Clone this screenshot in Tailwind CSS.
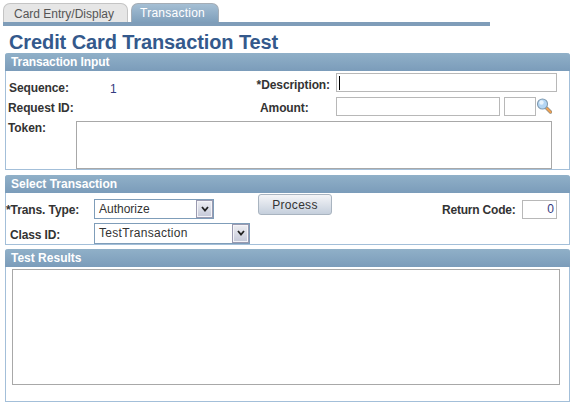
<!DOCTYPE html>
<html lang="en">
<head>
    <meta charset="UTF-8">
    <title>Credit Card Transaction Test</title>
    <script src="https://cdn.jsdelivr.net/npm/@tailwindcss/browser@4"></script>
</head>
<body class="bg-white w-[570px] h-[412px] overflow-hidden font-['Liberation_Sans',Arial,sans-serif] text-[12px] text-[#333]">

    <!-- Tabs -->
    <div class="pl-[3px] pt-[3px]">
        <div class="flex w-[487px] h-[23px] border-b-4 border-[#7f9db9] items-start gap-[3px]">
            <div class="w-[125px] h-[19px] pl-[10px] leading-[20px] bg-[#e6e6e6] border border-b-0 border-[#c4c4c4] rounded-t-[7px] text-[#555]">Card Entry/Display</div>
            <div class="w-[88px] h-[19px] pl-[8px] leading-[19px] tracking-[0.25px] bg-gradient-to-b from-[#a5bfd4] to-[#7f9fbb] border border-b-0 border-[#a4adb6] rounded-t-[7px] text-white">Transaction</div>
        </div>
    </div>

    <h1 class="ml-[9px] mt-[5px] h-[22px] text-[20px] leading-[22px] tracking-[-0.1px] font-bold text-[#34598c]">Credit Card Transaction Test</h1>

    <!-- Transaction Input -->
    <section class="ml-[5px] w-[565px] h-[117px] border border-t-0 border-[#a3bfd9] rounded-t-[3px] flex flex-col">
        <div class="-mx-px h-[18px] leading-[18px] pl-[6px] tracking-[-0.1px] rounded-t-[3px] bg-gradient-to-b from-[#90b0c8] to-[#7b9cba] text-white font-bold">Transaction Input</div>
        <div class="flex h-[25px] pt-[2px] tracking-[-0.1px]">
            <div class="w-[104px] pl-[3px] pt-[8px] font-bold leading-[14px]">Sequence:</div>
            <div class="w-[146px] pt-[9px] leading-[14px] text-[#333a80]">1</div>
            <div class="w-[74px] pt-[5px] leading-[14px] font-bold text-right whitespace-nowrap">*Description:</div>
            <div class="ml-[6px] w-[221px] h-[19px] border border-[#b8b8b8] flex items-center pl-[2px]">
                <div class="w-px h-[14px] bg-black"></div>
            </div>
        </div>
        <div class="flex h-[24px] pt-[1px] tracking-[-0.1px]">
            <div class="w-[254px] pl-[2px] pt-[4px] font-bold leading-[14px]">Request ID:</div>
            <div class="w-[76px] pt-[4px] font-bold leading-[14px]">Amount:</div>
            <div class="w-[164px] h-[19px] border border-[#b8b8b8]"></div>
            <div class="ml-[4px] w-[32px] h-[19px] border border-[#b8b8b8]"></div>
            <svg class="ml-px" width="15" height="19" viewBox="0 0 15 19">
                <path d="M9.5 11L13.5 15" stroke="#8a8a80" stroke-width="3.4" stroke-linecap="round"/>
                <path d="M9.5 11L13.5 15" stroke="#f0a050" stroke-width="2.2" stroke-linecap="round"/>
                <circle cx="5.5" cy="7" r="5" fill="#b4d6f4" stroke="#7f9ab0" stroke-width="1.1"/>
                <circle cx="4.5" cy="5.5" r="2.2" fill="#e8f3fc"/>
            </svg>
        </div>
        <div class="flex pt-[1px] tracking-[-0.1px]">
            <div class="w-[70px] pl-[2px] font-bold leading-[14px]">Token:</div>
            <div class="w-[476px] h-[48px] border border-[#a8a8a8]"></div>
        </div>
    </section>

    <!-- Select Transaction -->
    <section class="ml-[5px] mt-[5px] w-[565px] h-[70px] border border-t-0 border-[#a3bfd9] rounded-t-[3px] flex flex-col">
        <div class="-mx-px h-[18px] leading-[18px] pl-[6px] rounded-t-[3px] bg-gradient-to-b from-[#90b0c8] to-[#7b9cba] text-white font-bold">Select Transaction</div>
        <div class="flex h-[27px] pt-[6px]">
            <div class="w-[88px] pt-[4px] font-bold leading-[14px] tracking-[-0.1px]">*Trans. Type:</div>
            <div class="w-[120px] h-[20px] border border-[#7f9db9] flex justify-between items-center pl-[4px]">
                <span class="text-[#333]">Authorize</span>
                <span class="w-[17px] h-[18px] bg-gradient-to-b from-[#eeeef2] to-[#c4c8d8] border border-[#9a9ab0] shadow-[inset_0_0_0_1px_#f4f4f8] flex items-center justify-center">
                    <svg width="8" height="6" viewBox="0 0 8 6"><path d="M1 1L4 4.5L7 1" fill="none" stroke="#222" stroke-width="1.8"/></svg>
                </span>
            </div>
            <div class="ml-[44px] -mt-[5px] w-[74px] h-[21px] border border-[#a9b4c0] rounded-[3px] bg-gradient-to-b from-[#f4f5f8] to-[#c5cfdc] text-center leading-[20px] tracking-[0.3px]">Process</div>
            <div class="ml-[110px] w-[73px] pt-[4px] font-bold leading-[14px] tracking-[-0.2px] whitespace-nowrap">Return Code:</div>
            <div class="ml-[7px] mt-px w-[35px] h-[19px] border border-[#b8b8b8] text-right pr-[2px] leading-[17px] text-[#333a80]">0</div>
        </div>
        <div class="flex h-[25px] pt-[3px]">
            <div class="w-[88px] pl-[4px] pt-[5px] font-bold leading-[14px] tracking-[-0.15px]">Class ID:</div>
            <div class="w-[156px] h-[21px] border border-[#7f9db9] flex justify-between items-center pl-[4px]">
                <span class="text-[#333] tracking-[0.3px]">TestTransaction</span>
                <span class="w-[17px] h-[19px] bg-gradient-to-b from-[#eeeef2] to-[#c4c8d8] border border-[#9a9ab0] shadow-[inset_0_0_0_1px_#f4f4f8] flex items-center justify-center">
                    <svg width="8" height="6" viewBox="0 0 8 6"><path d="M1 1L4 4.5L7 1" fill="none" stroke="#222" stroke-width="1.8"/></svg>
                </span>
            </div>
        </div>
    </section>

    <!-- Test Results -->
    <section class="ml-[5px] mt-[4px] w-[565px] h-[153px] border border-t-0 border-[#a3bfd9] rounded-t-[3px] flex flex-col">
        <div class="-mx-px h-[18px] leading-[18px] pl-[6px] rounded-t-[3px] bg-gradient-to-b from-[#90b0c8] to-[#7b9cba] text-white font-bold">Test Results</div>
        <div class="ml-[6px] mt-[2px] w-[548px] h-[116px] border border-[#a8a8a8]"></div>
    </section>

</body>
</html>
